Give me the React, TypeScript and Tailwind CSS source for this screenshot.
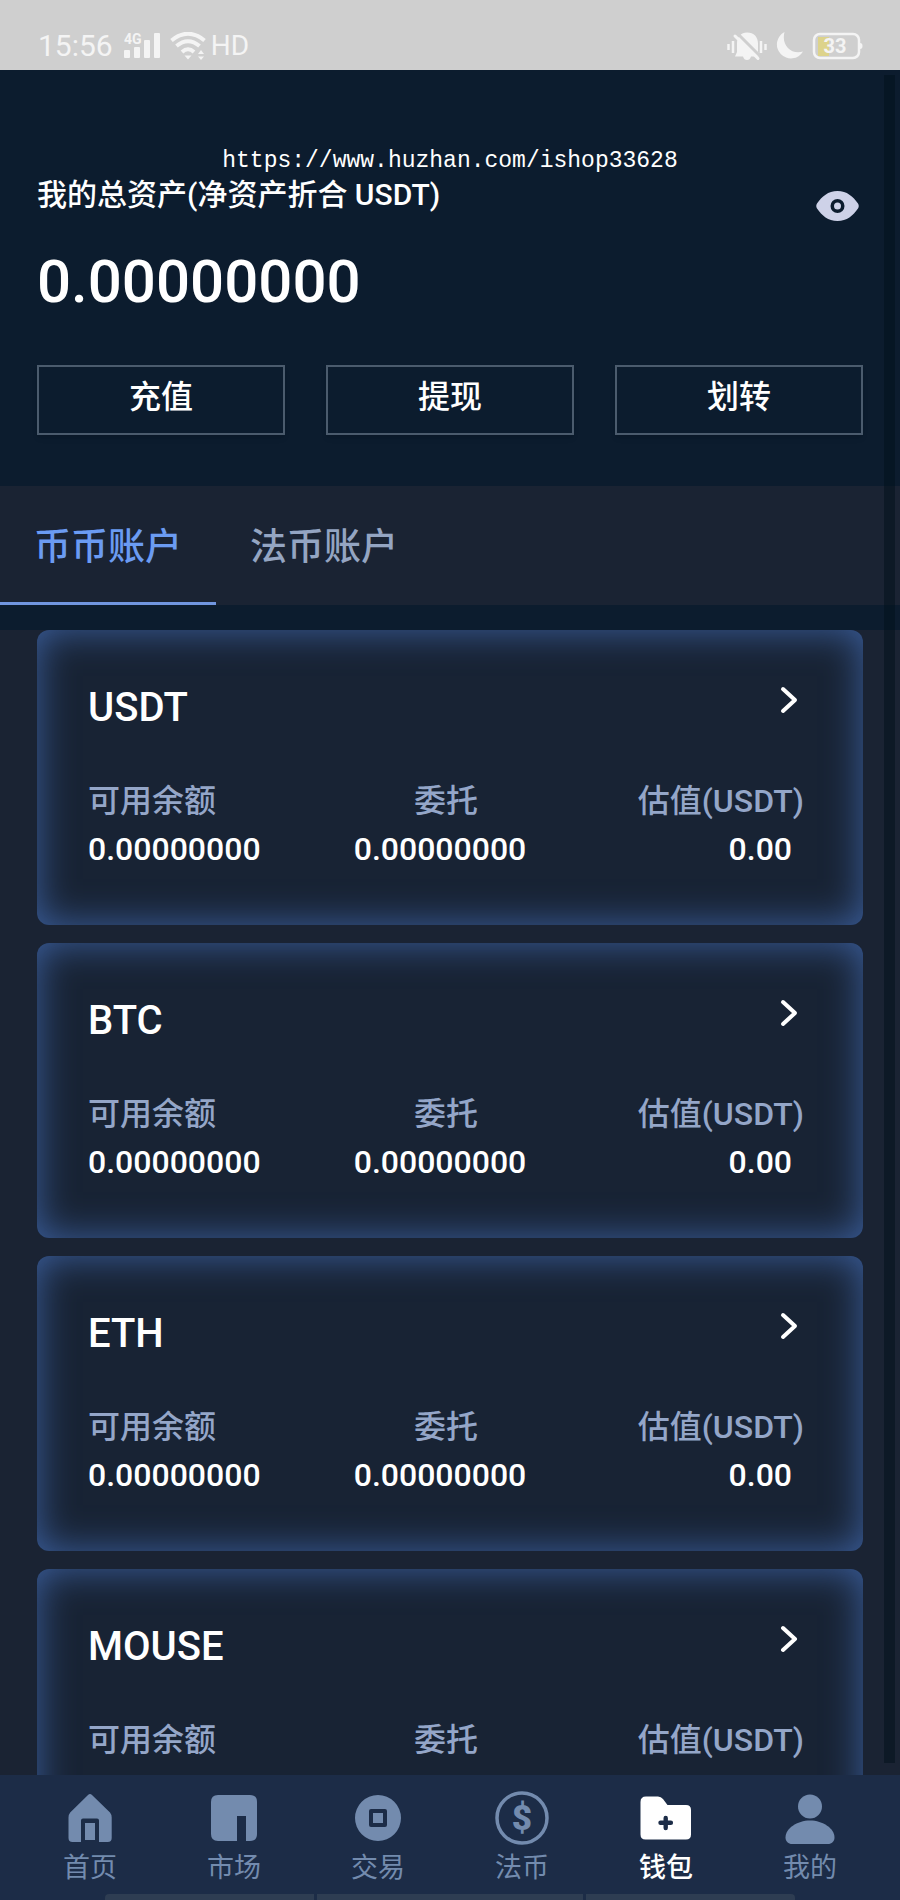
import React, { useState } from "react";

interface Asset {
  symbol: string;
  available: string;
  frozen: string;
  value: string;
}

interface NavEntry {
  label: string;
  icon: React.ReactNode;
}

const assets: Asset[] = ["USDT", "BTC", "ETH", "MOUSE"].map((symbol) => ({
  symbol,
  available: "0.00000000",
  frozen: "0.00000000",
  value: "0.00",
}));

const actions = ["充值", "提现", "划转"];
const accounts = ["币币账户", "法币账户"];

const navEntries: NavEntry[] = [
  {
    label: "首页",
    icon: (
      <svg viewBox="0 0 54 54" className="size-[54px]" fill="currentColor">
        <path d="M25 4q2-2 4 0l18 17.500q1.700 2 1.700 5V47q0 4-4 4H36V29.500q0-2-2-2H20q-2 0-2 2V51H9.500q-4 0-4-4V26.500q0-3 1.700-5z" />
        <path d="M22 32h10v17H22z" />
      </svg>
    ),
  },
  {
    label: "市场",
    icon: (
      <svg viewBox="0 0 54 54" className="size-[54px]" fill="currentColor">
        <path d="M11 4h32q7 0 7 7v32q0 7-7 7h-4V25h-9v25H11q-7 0-7-7V11q0-7 7-7z" />
      </svg>
    ),
  },
  {
    label: "交易",
    icon: (
      <svg viewBox="0 0 54 54" className="size-[54px]" fill="currentColor">
        <path
          fillRule="evenodd"
          d="M27 4a23 23 0 1 1 0 46a23 23 0 0 1 0-46zM20 18q-2 0-2 2v14q0 2 2 2h14q2 0 2-2V20q0-2-2-2z"
        />
        <path d="M22 22h10v10H22z" />
      </svg>
    ),
  },
  {
    label: "法币",
    icon: (
      <svg viewBox="0 0 54 54" className="size-[54px]" fill="currentColor">
        <circle cx="27" cy="27" r="25" fill="none" stroke="currentColor" strokeWidth="3.500" />
        <text x="27" y="39" textAnchor="middle" className="font-[Roboto] text-[35px] font-black">
          $
        </text>
      </svg>
    ),
  },
  {
    label: "钱包",
    icon: (
      <svg viewBox="0 0 54 54" className="size-[54px]" fill="currentColor">
        <path
          fillRule="evenodd"
          d="M7 5.500h12q3 0 5 2.500l4.500 6H47q5 0 5 5v24.500q0 5-5 5H6.500q-5 0-5-5V11q0-5.500 5.500-5.500zM24.500 27v2.500H21.500q-2.200 0-2.200 2.200T21.500 34h3v3q0 2.200 2.200 2.200t2.200-2.200V34h3q2.200 0 2.200-2.200t-2.200-2.300h-3V27q0-2.200-2.200-2.200T24.500 27z"
        />
      </svg>
    ),
  },
  {
    label: "我的",
    icon: (
      <svg viewBox="0 0 54 54" className="size-[54px]" fill="currentColor">
        <circle cx="27" cy="15.500" r="12" />
        <path d="M27 29.500c13 0 24.500 8 24.500 17 0 4-3 6.500-6.500 6.500H9c-3.500 0-6.500-2.500-6.500-6.500 0-9 11.500-17 24.500-17z" />
      </svg>
    ),
  },
];

const StatusBar: React.FC = () => (
  <div className="flex h-[70px] shrink-0 items-center justify-between bg-[#cfcfcf] pt-[21px] pr-[37px] pl-[38px] text-[#f4f4f4]">
    <div className="flex items-center">
      <span className="text-[30px]">15:56</span>
      <svg viewBox="0 0 37 28" className="ml-[11px] h-7 w-[37px]" fill="currentColor">
        <text x="0" y="12" className="font-[Roboto] text-[14px] font-bold">
          4G
        </text>
        <rect x="0" y="18" width="6" height="8" rx="1" />
        <rect x="10" y="15" width="6" height="11" rx="1" />
        <rect x="20" y="8" width="6" height="18" rx="1" />
        <rect x="30" y="1" width="6" height="25" rx="1" />
      </svg>
      <svg viewBox="0 0 36 28" className="ml-[9px] h-7 w-9" fill="none" stroke="currentColor" strokeWidth="4">
        <path d="M1.500 8.500Q18-5 34.500 8.500M6.500 14Q18 4.500 29.500 14M12 20Q18 14.500 24 20" />
        <path d="M14.500 23.500h7L18 27.500zM28 22h6l-3-4zM28 24.500h6l-3 3.500z" fill="currentColor" stroke="none" />
      </svg>
      <span className="ml-[5px] text-[28px]">HD</span>
    </div>
    <div className="flex items-center">
      <svg viewBox="0 0 40 30" className="h-[30px] w-10" fill="currentColor">
        <path d="M20 1.500c7 0 11 4.500 11 11V21l3 4.500H24q-1 3.500-4 3.500t-4-3.500H8L10 21v-8.500C10 6 14 1.500 20 1.500z" />
        <path d="M10 2l25 25" stroke="#cfcfcf" strokeWidth="3" />
        <path d="M8 5l23 22.500" stroke="currentColor" strokeWidth="3" strokeLinecap="round" />
        <path d="M1.500 13v6M6 10v12M34 10v12M38.500 13v6" stroke="currentColor" strokeWidth="2.500" />
      </svg>
      <svg viewBox="0 0 30 30" className="ml-[7px] size-[30px]" fill="currentColor">
        <path d="M10.500 1A14 14 0 1 0 29 20.500C17 24 7 14 10.500 1z" />
      </svg>
      <svg viewBox="0 0 51 28" className="ml-[8px] h-7 w-[51px]">
        <rect x="6" y="5" width="11" height="19" fill="#ddd38b" />
        <rect x="2" y="2" width="45" height="24" rx="6" fill="none" stroke="currentColor" strokeWidth="2.500" />
        <path d="M48 11q2.500 0 2.500 3T48 17z" fill="currentColor" />
        <text x="23" y="21" fill="currentColor" textAnchor="middle" className="font-[Roboto] text-[20px] font-bold">
          33
        </text>
      </svg>
    </div>
  </div>
);

const AssetCard: React.FC<{ asset: Asset }> = ({ asset }) => (
  <article className="h-[295px] shrink-0 rounded-xl bg-[#182334] pt-[54px] pr-[59px] pl-[51px] shadow-[inset_0_0_38px_#3c609f]">
    <div className="flex h-12 items-center justify-between">
      <h2 className="text-[40px] font-medium">{asset.symbol}</h2>
      <a href="#" aria-label={asset.symbol} className="pr-[6px] pb-4">
        <svg viewBox="0 0 18 28" className="h-7 w-[18px]" fill="none" stroke="currentColor" strokeWidth="4">
          <path d="M3 3L15 14L3 25" strokeLinecap="round" strokeLinejoin="round" />
        </svg>
      </a>
    </div>
    <dl className="mt-[45px] grid grid-cols-3 text-[32px] leading-[48px] font-medium">
      <div>
        <dt className="text-[#94a6c8]">可用余额</dt>
        <dd>{asset.available}</dd>
      </div>
      <div className="text-center">
        <dt className="text-[#94a6c8]">委托</dt>
        <dd className="pr-3">{asset.frozen}</dd>
      </div>
      <div className="text-right">
        <dt className="text-[#94a6c8]">估值(USDT)</dt>
        <dd className="pr-3">{asset.value}</dd>
      </div>
    </dl>
  </article>
);

const App: React.FC = () => {
  const [account, setAccount] = useState(0);
  const [hidden, setHidden] = useState(false);
  const [page, setPage] = useState("钱包");

  return (
    <div className="relative flex h-screen flex-col overflow-hidden bg-[#0c1c2e] font-[Roboto,'Noto_Sans_CJK_SC',sans-serif] text-white">
      <StatusBar />

      <header className="px-[37px] pt-[77px] pb-[51px]">
        <p className="text-center font-['Liberation_Mono','Noto_Sans_CJK_SC',monospace] text-[23px] leading-7">
          https://www.huzhan.com/ishop33628
        </p>
        <div className="flex items-start justify-between">
          <div>
            <h1 className="text-[30px] leading-10 font-medium">我的总资产(净资产折合 USDT)</h1>
            <p className="mt-[29px] text-[60px] leading-[76px] font-medium">
              {hidden ? "******" : "0.00000000"}
            </p>
          </div>
          <button
            aria-label="显示或隐藏资产"
            onClick={() => setHidden((prev) => !prev)}
            className="mt-[15px] mr-[4px] text-[#ced2e8]"
          >
            <svg viewBox="0 0 43 32" className="h-8 w-[43px]" fill="currentColor">
              <path
                fillRule="evenodd"
                d="M21.500 1C31 1 37 6.500 42 13.500q1.500 2.500 0 5C37 25.500 31 31 21.500 31S6 25.500 1 18.500q-1.500-2.500 0-5C6 6.500 12 1 21.500 1zM21.500 9a7 7 0 1 0 0 14a7 7 0 0 0 0-14z"
              />
              <circle cx="21.500" cy="16" r="3.500" />
            </svg>
          </button>
        </div>
        <div className="mt-[45px] flex gap-[41px]">
          {actions.map((action) => (
            <button
              key={action}
              className="h-[70px] flex-1 border-2 border-[#4b5b6d] pb-[7px] text-[32px] font-medium shadow-md"
            >
              {action}
            </button>
          ))}
        </div>
      </header>

      <div className="flex h-[119px] shrink-0 bg-[#1a2333]">
        {accounts.map((name, index) => (
          <button
            key={name}
            onClick={() => setAccount(index)}
            className={`border-b-3 px-[34px] pt-2 text-[37px] font-medium ${
              account === index
                ? "border-[#7196e0] text-[#6b9bf2]"
                : "border-transparent text-[#94a5c2]"
            }`}
          >
            {name}
          </button>
        ))}
      </div>

      <main className="mt-[25px] flex min-h-0 flex-1 flex-col gap-[18px] overflow-y-auto bg-[#1a2333] px-[37px] [scrollbar-width:none]">
        {assets.map((asset) => (
          <AssetCard key={asset.symbol} asset={asset} />
        ))}
      </main>

      <nav className="shrink-0 bg-[#1c2c47] px-[18px] pt-[16px]">
        <div className="flex">
          {navEntries.map((entry) => (
            <button
              key={entry.label}
              onClick={() => setPage(entry.label)}
              className={`flex flex-1 flex-col items-center text-[27px] leading-8 ${
                page === entry.label ? "font-medium text-white" : "text-[#738bae]"
              }`}
            >
              {entry.icon}
              <span className="mt-[7px]">{entry.label}</span>
            </button>
          ))}
        </div>
        <div className="mt-[10px] flex h-[6px] gap-[3px] px-[87px]">
          <div className="flex-1 rounded-tl bg-[#2e3d52]" />
          <div className="w-[266px] bg-[#2e3d52]" />
          <div className="flex-1 rounded-tr bg-[#2e3d52]" />
        </div>
      </nav>

      {/* scroll thumb */}
      <div className="pointer-events-none absolute top-[75px] right-[5px] bottom-[137px] w-[11px] bg-[#00101a]/50" />
    </div>
  );
};

export default App;
